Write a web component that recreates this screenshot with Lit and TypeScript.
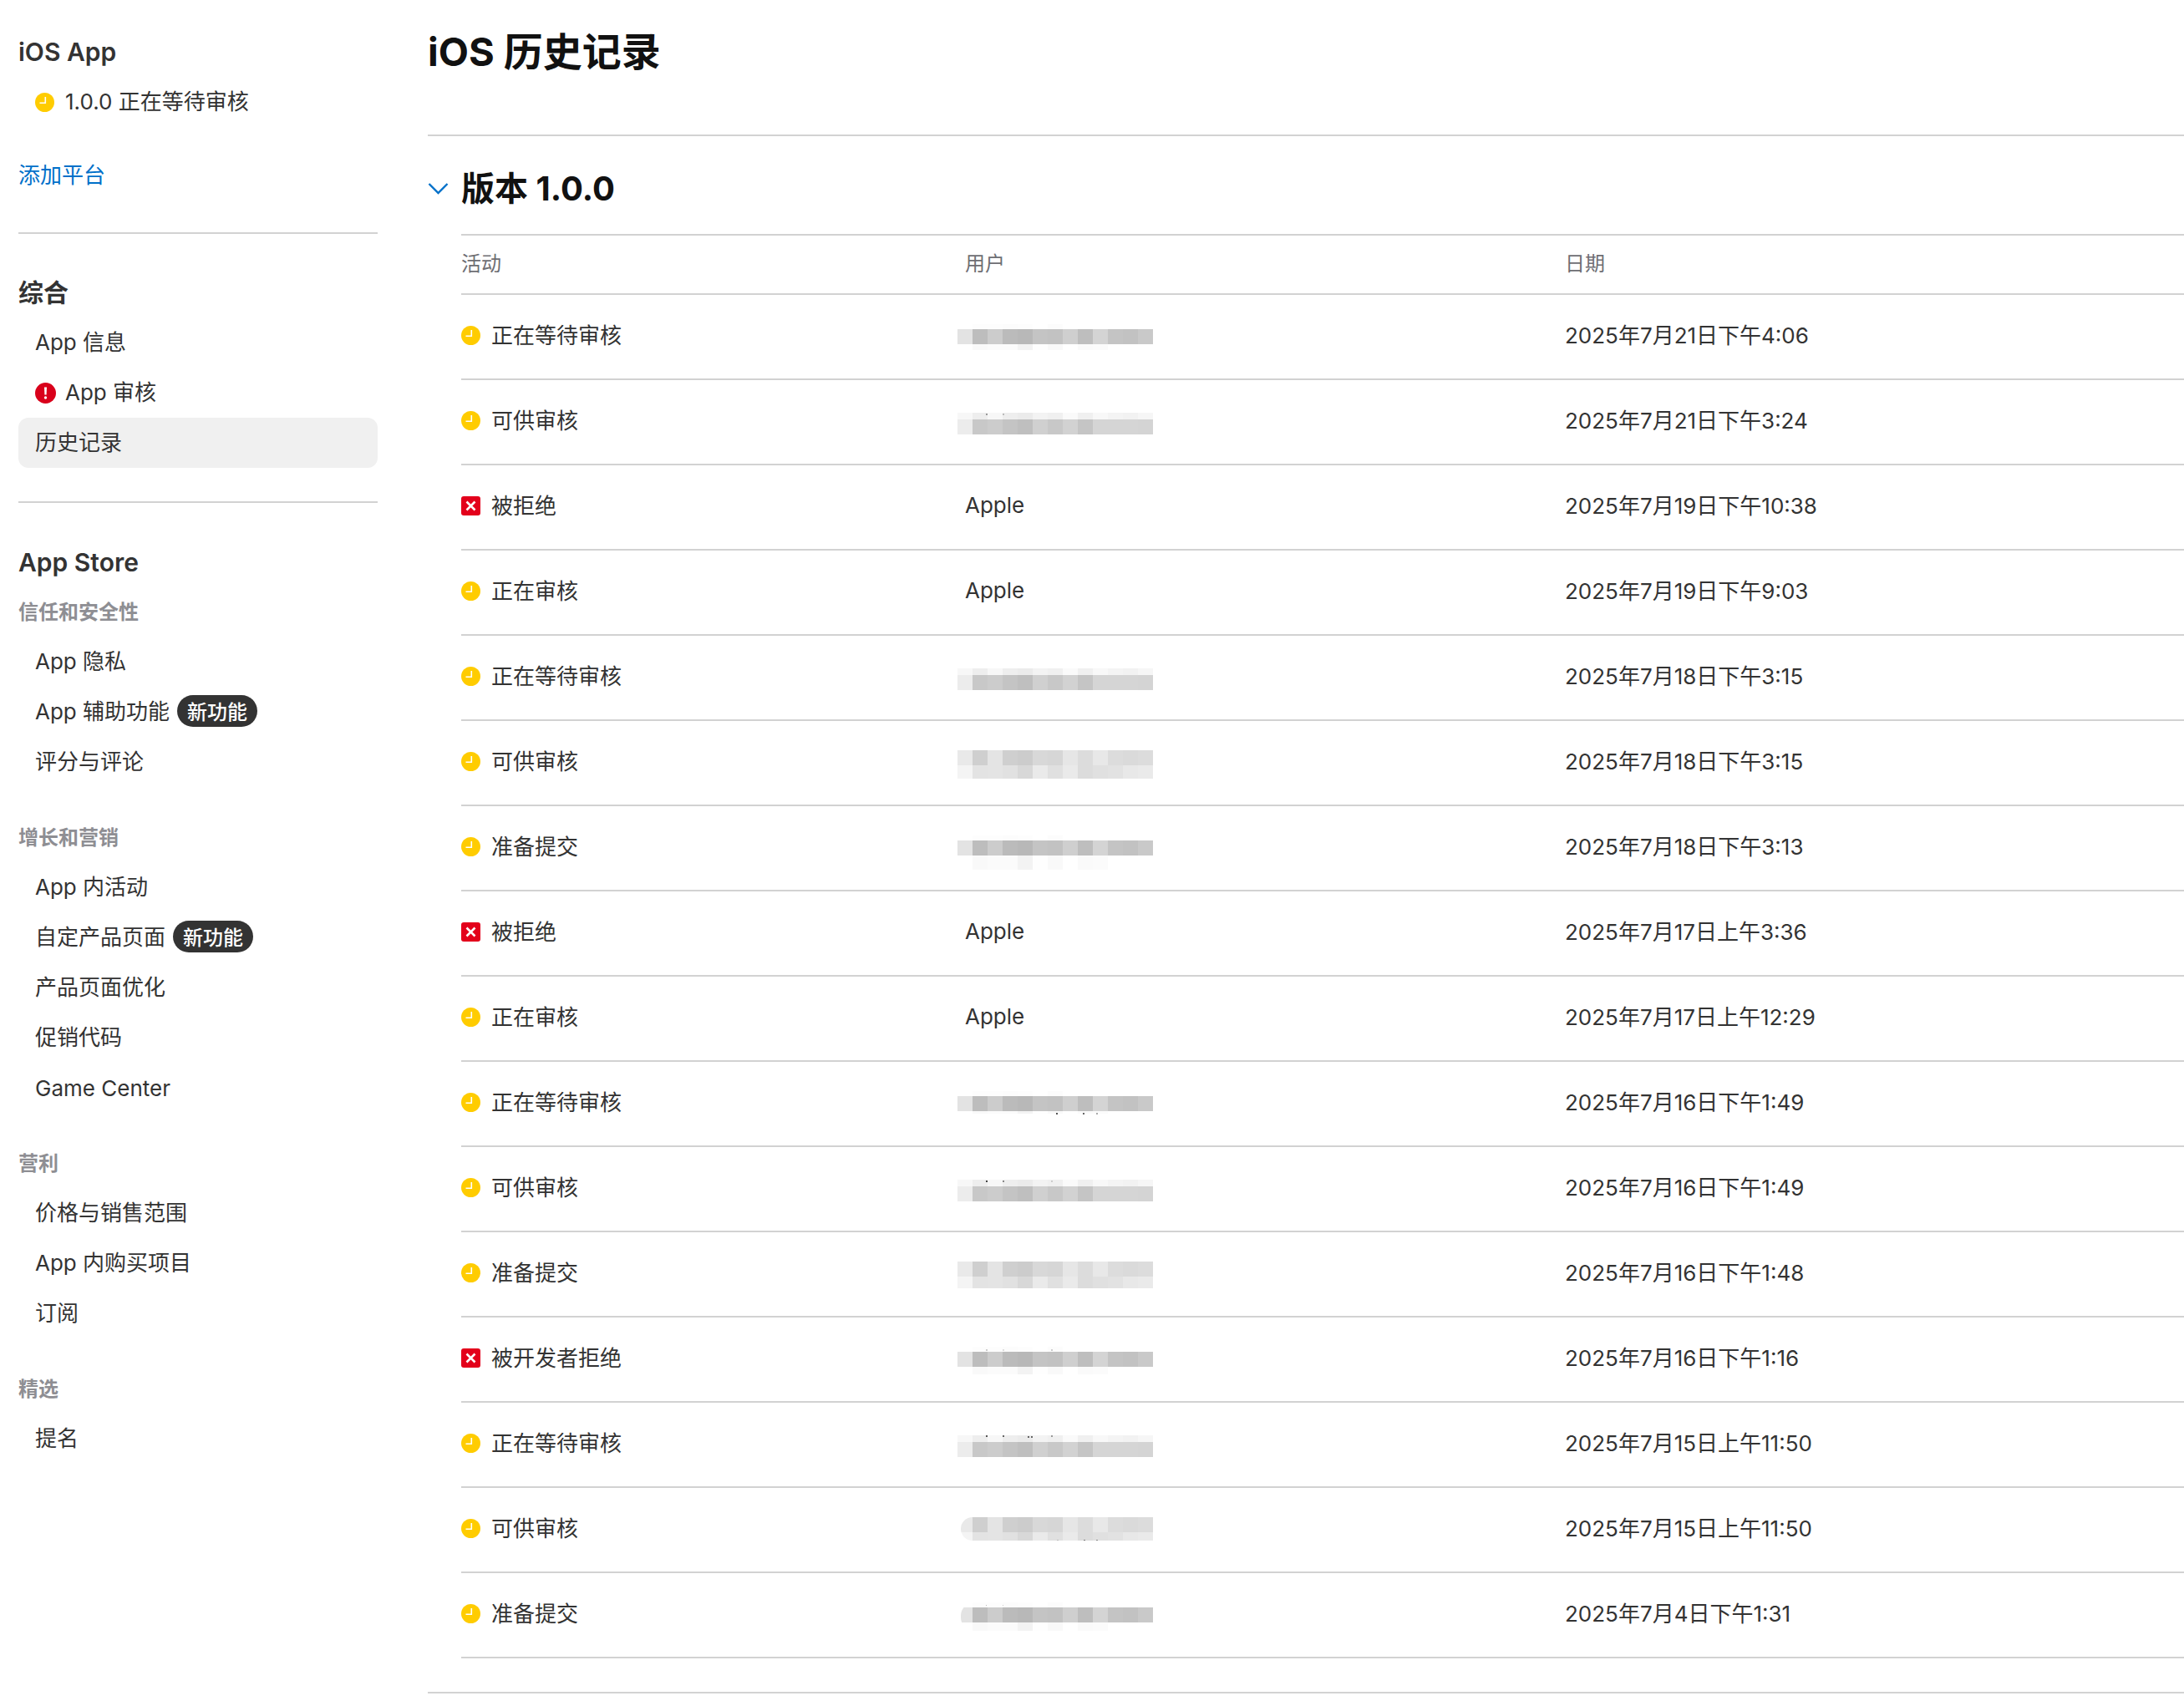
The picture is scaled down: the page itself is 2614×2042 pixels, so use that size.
import { LitElement, html, css, svg } from "lit";
import { customElement } from "lit/decorators.js";

type Band = [number, string];
type Speck = [number, number, number, string];
interface Blur { top: number; bands: Band[]; specks?: Speck[]; radius?: boolean }
interface Row { icon: "clock" | "x"; activity: string; user?: Blur; date: string }

const A_TOP = "ff fd fd fc fd ff fc ff ff ff ff ff ff";
const A = "e3 bd cc bb b8 c4 c2 cf be d4 c4 c2 c9";
const A_LOW = "ff f9 fb fb f3 fe f9 ff fa fb ff ff ff";
const B_TOP = "f7 ee f7 ee eb f3 f0 fa f0 f8 f4 f2 f6";
const B = "ec c8 cc c4 bf d0 c8 d2 c5 d5 d5 d5 d4";
const C_TOP = "e9 cf e4 cf cc d8 d6 e6 dc e8 dc da dc";
const C_LOW = "f4 e3 e4 e1 d8 ea e0 ea dc e0 e2 e8 ea";

const a = (low: number, specks?: Speck[], radius?: boolean): Blur => ({
  top: 35,
  bands: [[6, A_TOP], [18, A], [low, A_LOW]],
  specks,
  radius,
});
const b = (specks?: Speck[]): Blur => ({ top: 39, bands: [[8, B_TOP], [18, B]], specks });
const c = (low: number, radius?: boolean, specks?: Speck[]): Blur => ({
  top: 35,
  bands: [[18, C_TOP], [low, C_LOW]],
  radius,
  specks,
});

const rows: Row[] = [
  { icon: "clock", activity: "正在等待审核", user: a(7), date: "2025年7月21日下午4:06" },
  { icon: "clock", activity: "可供审核", user: b([[34, 1, 2, "#999"], [54, 1, 2, "#bbb"]]), date: "2025年7月21日下午3:24" },
  { icon: "x", activity: "被拒绝", date: "2025年7月19日下午10:38" },
  { icon: "clock", activity: "正在审核", date: "2025年7月19日下午9:03" },
  { icon: "clock", activity: "正在等待审核", user: b(), date: "2025年7月18日下午3:15" },
  { icon: "clock", activity: "可供审核", user: c(16), date: "2025年7月18日下午3:15" },
  { icon: "clock", activity: "准备提交", user: a(17), date: "2025年7月18日下午3:13" },
  { icon: "x", activity: "被拒绝", date: "2025年7月17日上午3:36" },
  { icon: "clock", activity: "正在审核", date: "2025年7月17日上午12:29" },
  { icon: "clock", activity: "正在等待审核", user: a(3, [[118, 26, 2, "#555"], [150, 26, 2, "#666"], [166, 26, 2, "#aaa"]]), date: "2025年7月16日下午1:49" },
  { icon: "clock", activity: "可供审核", user: b([[34, 1, 2, "#444"], [54, 1, 2, "#888"], [112, 1, 2, "#ccc"]]), date: "2025年7月16日下午1:49" },
  { icon: "clock", activity: "准备提交", user: c(14), date: "2025年7月16日下午1:48" },
  { icon: "x", activity: "被开发者拒绝", user: a(9, [[34, 3, 2, "#ccc"], [54, 3, 2, "#ddd"], [112, 3, 2, "#ccc"]]), date: "2025年7月16日下午1:16" },
  { icon: "clock", activity: "正在等待审核", user: b([[34, 0, 2, "#555"], [54, 0, 2, "#666"], [84, 1, 2, "#666"], [88, 1, 2, "#666"], [112, 0, 2, "#999"]]), date: "2025年7月15日上午11:50" },
  { icon: "clock", activity: "可供审核", user: c(10, true, [[119, 27, 2, "#bbb"], [151, 27, 2, "#777"], [166, 27, 2, "#888"]]), date: "2025年7月15日上午11:50" },
  { icon: "clock", activity: "准备提交", user: a(10, [[34, 3, 1, "#bbb"], [54, 3, 1, "#ccc"]], true), date: "2025年7月4日下午1:31" },
];

const clock = html`<svg class="ic" viewBox="0 0 23 23" aria-hidden="true">
  <circle cx="11.5" cy="11.5" r="11.5" fill="#ffcc00"></circle>
  ${svg`<path d="M12.3 5v7.3H5.5" fill="none" stroke="#fff" stroke-width="1.6"></path>`}
</svg>`;
const cross = html`<svg class="ic" viewBox="0 0 23 23" aria-hidden="true">
  <rect width="23" height="23" rx="3" fill="#e3001b"></rect>
  ${svg`<path d="M6.5 6.5l10 10M16.5 6.5l-10 10" fill="none" stroke="#fff" stroke-width="2.6"></path>`}
</svg>`;
const alert = html`<svg class="ic err" viewBox="0 0 25 25" aria-hidden="true">
  <circle cx="12.5" cy="12.5" r="12.5" fill="#d9001b"></circle>
  ${svg`<path d="M11 5.5h3l-.4 9h-2.2z" fill="#fff"></path><circle cx="12.5" cy="18" r="1.7" fill="#fff"></circle>`}
</svg>`;
const chevron = html`<svg class="chev" viewBox="0 0 25 15" aria-hidden="true">
  ${svg`<path d="M1.5 2l11 11 11-11" fill="none" stroke="#0070c9" stroke-width="2.4"></path>`}
</svg>`;

@customElement("app-root")
export class AppRoot extends LitElement {
  static styles = css`
    :host {
      display: flex;
      width: 2614px;
      height: 2042px;
      overflow: hidden;
      background: #fff;
      color: #333;
      font-family: "Inter", "Noto Sans CJK SC", sans-serif;
      font-size: 26px;
    }
    .side {
      flex: none;
      width: 430px;
      margin-left: 22px;
      padding-top: 42px;
      display: flex;
      flex-direction: column;
    }
    .head {
      font-size: 30px;
      font-weight: 600;
      line-height: 40px;
      color: #333;
    }
    .cat {
      font-size: 24px;
      font-weight: 600;
      height: 40px;
      box-sizing: border-box;
      padding-top: 3px;
      line-height: 37px;
      color: #8e8e93;
    }
    .item {
      height: 60px;
      padding-left: 20px;
      display: flex;
      align-items: center;
      color: #333;
      border-radius: 12px;
    }
    .item.on { background: #f0f0f0; }
    .item .ic { margin-right: 13px; }
    .t { padding-bottom: 5px; }
    .t.latin { padding-bottom: 0; }
    .link {
      height: 60px;
      line-height: 60px;
      color: #0070c9;
    }
    .div { height: 2px; background: #d2d2d2; flex: none; }
    .badge {
      margin-left: 9px;
      margin-bottom: 3px;
      height: 38px;
      width: 96px;
      border-radius: 19px;
      background: #333;
      color: #fff;
      font-size: 24px;
      font-weight: 500;
      display: flex;
      align-items: center;
      justify-content: center;
    }
    .m10 { margin-top: 10px; }
    .m28 { margin-top: 28px; }
    .m38 { margin-top: 38px; }
    .m50 { margin-top: 50px; }
    .m40 { margin-top: 40px; }
    .m51 { margin-top: 51px; }
    .m18 { margin-top: 18px; }
    .m11 { margin-top: 11px; }
    .m39 { margin-top: 39px; }

    .main {
      flex: 1;
      margin-left: 60px;
      min-width: 0;
    }
    h1 {
      margin: 0;
      padding: 22px 0 59px;
      font-size: 47px;
      line-height: 80px;
      font-weight: 700;
      color: #111;
      border-bottom: 2px solid #d2d2d2;
    }
    .ver {
      display: flex;
      align-items: center;
      gap: 15px;
      padding: 32px 0 24px;
    }
    .chev { width: 25px; height: 15px; flex: none; margin-bottom: 1px; }
    h2 {
      margin: 0;
      padding-top: 1px;
      font-size: 40px;
      line-height: 60px;
      font-weight: 700;
      color: #111;
    }
    .table { margin-left: 40px; }
    .grid {
      display: grid;
      grid-template-columns: 603px 718px 1fr;
    }
    .thead {
      height: 73px;
      box-sizing: border-box;
      border-top: 2px solid #d2d2d2;
      border-bottom: 2px solid #d2d2d2;
      padding-bottom: 6px;
      align-items: center;
      font-size: 24px;
      color: #6e6e73;
    }
    .row {
      height: 102px;
      box-sizing: border-box;
      border-bottom: 2px solid #d2d2d2;
      padding-bottom: 3px;
      align-items: center;
    }
    .act { display: flex; align-items: center; gap: 13px; }
    .apple { padding-bottom: 2px; }
    .date { padding-bottom: 4px; }
    .ic { width: 23px; height: 23px; flex: none; display: block; }
    .ic.err { width: 25px; height: 25px; margin-right: 11px; }
    .user { align-self: start; }
    .blur {
      position: relative;
      width: 234px;
      margin-left: -9px;
    }
    .blur.round { clip-path: inset(0 0 0 4px round 16px 0 0 16px); }
    .band { display: grid; grid-template-columns: repeat(13, 18px); }
    .speck { position: absolute; }
    .foot { margin-top: 40px; height: 2px; background: #d2d2d2; }
  `;

  private item(text: string, cls = "", badge = false, ic: unknown = "") {
    const latin = /^[\x20-\x7e]+$/.test(text);
    return html`<div class="item ${cls}">${ic}<span class="t ${latin ? "latin" : ""}">${text}</span>${badge ? html`<span class="badge">新功能</span>` : ""}</div>`;
  }

  private blur(u: Blur) {
    return html`<div class="blur ${u.radius ? "round" : ""}" style="margin-top:${u.top}px">
      ${u.bands.map(([h, cells]) => html`<div class="band" style="height:${h}px">
        ${cells.split(" ").map((c) => html`<i style="background:#${c}${c}${c}"></i>`)}
      </div>`)}
      ${(u.specks ?? []).map(([x, y, s, col]) => html`<b class="speck" style="left:${x}px;top:${y}px;width:${s}px;height:${s}px;background:${col}"></b>`)}
    </div>`;
  }

  render() {
    return html`
      <nav class="side">
        <div class="head">iOS App</div>
        <div class="m10">${this.item("1.0.0 正在等待审核", "", false, clock)}</div>
        <div class="link m28">添加平台</div>
        <div class="div m38"></div>
        <div class="head m50">综合</div>
        <div class="m10">${this.item("App 信息")}</div>
        ${this.item("App 审核", "", false, alert)}
        ${this.item("历史记录", "on")}
        <div class="div m40"></div>
        <div class="head m51">App Store</div>
        <div class="cat m18">信任和安全性</div>
        <div class="m11">${this.item("App 隐私")}</div>
        ${this.item("App 辅助功能", "", true)}
        ${this.item("评分与评论")}
        <div class="cat m39">增长和营销</div>
        <div class="m11">${this.item("App 内活动")}</div>
        ${this.item("自定产品页面", "", true)}
        ${this.item("产品页面优化")}
        ${this.item("促销代码")}
        ${this.item("Game Center")}
        <div class="cat m39">营利</div>
        <div class="m11">${this.item("价格与销售范围")}</div>
        ${this.item("App 内购买项目")}
        ${this.item("订阅")}
        <div class="cat m39">精选</div>
        <div class="m11">${this.item("提名")}</div>
      </nav>
      <main class="main">
        <h1>iOS 历史记录</h1>
        <div class="ver">${chevron}<h2>版本 1.0.0</h2></div>
        <div class="table">
          <div class="grid thead"><span>活动</span><span>用户</span><span>日期</span></div>
          ${rows.map((r) => html`<div class="grid row">
            <div class="act">${r.icon === "clock" ? clock : cross}<span class="date">${r.activity}</span></div>
            ${r.user ? html`<div class="user">${this.blur(r.user)}</div>` : html`<div class="apple">Apple</div>`}
            <div class="date">${r.date}</div>
          </div>`)}
        </div>
        <div class="foot"></div>
      </main>
    `;
  }
}
